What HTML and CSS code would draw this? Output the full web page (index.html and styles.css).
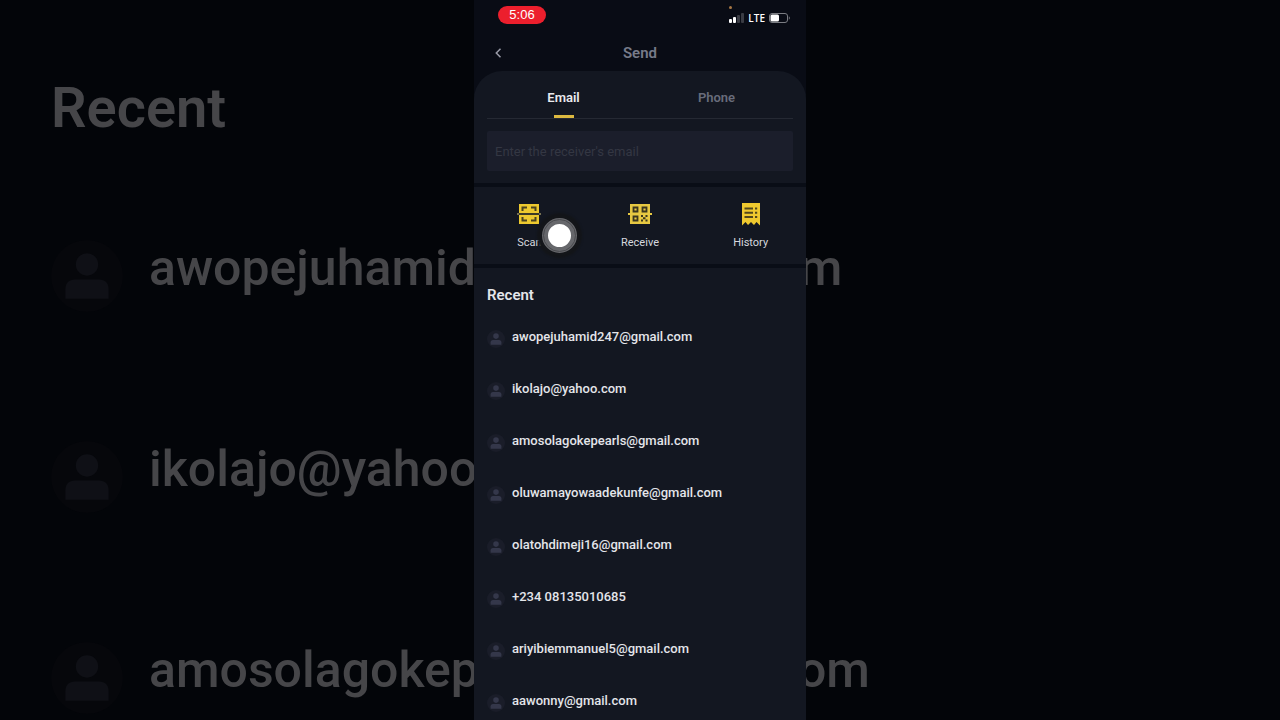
FILE: index.html
```html
<!DOCTYPE html>
<html lang="en">
<head>
<meta charset="utf-8">
<meta name="viewport" content="width=device-width, initial-scale=1">
<title>Send</title>
<link rel="stylesheet" href="styles.css">
</head>

<body>

<!-- person icon, used by every row -->
<svg class="defs" aria-hidden="true">
	<symbol id="person" viewBox="0 0 20 20">
		<circle class="p-bg" cx="10" cy="10" r="10"/>
		<circle class="p-fg" cx="10" cy="6.8" r="3.1"/>
		<path class="p-fg" d="M4 16.3v-2.6c0-1.7 1-2.7 2.6-2.7h6.8c1.6 0 2.6 1 2.6 2.7v2.6z"/>
	</symbol>
</svg>

<!-- enlarged list behind the phone -->
<div class="backdrop" aria-hidden="true">
	<div class="big-title">Recent</div>
	<div class="big-row"><svg><use href="#person"/></svg><span>awopejuhamid247@gmail.com</span></div>
	<div class="big-row"><svg><use href="#person"/></svg><span>ikolajo@yahoo.com</span></div>
	<div class="big-row"><svg><use href="#person"/></svg><span>amosolagokepearls@gmail.com</span></div>
</div>

<main class="phone">
	<div class="status">
		<span class="time">5:06</span>
		<div class="signal">
			<span class="dot"></span>
			<svg width="15" height="10" viewBox="0 0 15 10">
				<g fill="#fff"><rect y="6" width="3" height="4" rx="1"/><rect x="4" y="4" width="3" height="6" rx="1"/></g>
				<g fill="#3a3c44"><rect x="8" y="2" width="3" height="8" rx="1"/><rect x="12" width="3" height="10" rx="1"/></g>
			</svg>
			<span class="lte">LTE</span>
			<svg width="21" height="10" viewBox="0 0 21 10">
				<rect x=".5" y=".5" width="18" height="9" rx="2.5" fill="none" stroke="#7b7d83"/>
				<rect x="1.5" y="1.5" width="8.5" height="7" rx="1.5" fill="#fff"/>
				<path d="M19.8 3.3v3.4q1-.6 1-1.7t-1-1.7z" fill="#7b7d83"/>
			</svg>
		</div>
	</div>

	<header class="head">
		<button class="back" type="button" aria-label="Back">
			<svg width="8" height="10" viewBox="0 0 8 10"><path d="M6.500 .8L2.300 5l4.200 4.200" fill="none" stroke="#9a9ca8" stroke-width="1.500"/></svg>
		</button>
		<h1>Send</h1>
	</header>

	<div class="sheet">
		<section class="form">
			<div class="tabs" role="tablist">
				<button class="tab active" type="button" role="tab" aria-selected="true">Email</button>
				<button class="tab" type="button" role="tab" aria-selected="false">Phone</button>
			</div>
			<input class="receiver" type="email" aria-label="Receiver's email" placeholder="Enter the receiver's email">
		</section>

		<nav class="actions">
			<a href="#scan">
				<svg width="24" height="24" viewBox="0 0 24 24">
					<path d="M2 2h20v20H2z" fill="#edc92f"/>
					<path d="M5.5 9V5.5H10M14 5.5h4.500V9M5.500 15v3.500H10M14 18.500h4.500V15" fill="none" stroke="#4b431f" stroke-width="2"/>
					<path d="M2 11h20v2H2z" fill="#3d3b27"/>
					<path d="M0 11h2v2H0zM22 11h2v2h-2z" fill="#777153"/>
				</svg>
				<span>Scan</span>
				<i class="touch"></i>
			</a>
			<a href="#receive">
				<svg width="24" height="24" viewBox="0 0 24 24">
					<path d="M2 2h20v20H2zM0 11h24v2H0z" fill="#e7c842"/>
					<g fill="none" stroke="#3b361f" stroke-width="1.800">
						<path d="M5.500 5.500h4v4h-4zM14.500 5.500h4v4h-4zM5.500 14.500h4v4h-4z"/>
					</g>
					<path d="M13 13h2v2h-2zM17.500 13h2v2h-2zM15 15.300h2.500v2H15zM13 17.500h2v2h-2zM17.500 17.500h2v2h-2z" fill="#3b361f"/>
				</svg>
				<span>Receive</span>
			</a>
			<a href="#history">
				<svg width="24" height="24" viewBox="0 0 24 24">
					<path d="M3 1h18v22.500l-3.500-3.500-2.500 3-3-3-3 3-2.500-3L3 23.500z" fill="#efc92f"/>
					<path d="M5.500 6.500h8.500M5.500 10.800h8.500M5.500 15h8.500M16 6.500h2.200M16 10.800h2.200M16 15h2.200" stroke="#51471c" stroke-width="2"/>
				</svg>
				<span>History</span>
			</a>
		</nav>

		<section class="recent">
			<h2>Recent</h2>
			<ul>
				<li><svg><use href="#person"/></svg><span>awopejuhamid247@gmail.com</span></li>
				<li><svg><use href="#person"/></svg><span>ikolajo@yahoo.com</span></li>
				<li><svg><use href="#person"/></svg><span>amosolagokepearls@gmail.com</span></li>
				<li><svg><use href="#person"/></svg><span>oluwamayowaadekunfe@gmail.com</span></li>
				<li><svg><use href="#person"/></svg><span>olatohdimeji16@gmail.com</span></li>
				<li><svg><use href="#person"/></svg><span>+234 08135010685</span></li>
				<li><svg><use href="#person"/></svg><span>ariyibiemmanuel5@gmail.com</span></li>
				<li><svg><use href="#person"/></svg><span>aawonny@gmail.com</span></li>
			</ul>
		</section>
	</div>
</main>

</body>
</html>
```
FILE: styles.css
```css
* {
	box-sizing: border-box;
}

body {
	margin: 0;
	height: 100vh;
	display: grid;
	grid-template-columns: 100%;
	grid-template-rows: 100%;
	overflow: hidden;
	background: #030509;
	color: #e4e5ea;
	font-family: Roboto, "Noto Sans", sans-serif;
}

button {
	border: 0;
	padding: 0;
	background: none;
	font-family: inherit;
}

.defs {
	position: absolute;
	width: 0;
	height: 0;
}

/* backdrop and phone share one grid cell */
.backdrop,
.phone {
	grid-area: 1 / 1;
	overflow: hidden;
}

.backdrop {
	--person-bg: #06070b;
	--person-fg: #0f1016;
	padding: 68px 0 0 51px;
	color: #464649;
	white-space: nowrap;
}

.big-title {
	height: 100px;
	font-size: 56px;
	line-height: 80px;
	font-weight: 600;
}

.big-row {
	display: flex;
	align-items: flex-start;
	gap: 26px;
	height: 201px;
	padding-top: 60px;
	font-size: 50px;
	line-height: 80px;
	font-weight: 500;
}

.big-row svg {
	width: 72px;
	height: 72px;
	margin-top: 12px;
}

.p-bg {
	fill: var(--person-bg);
}

.p-fg {
	fill: var(--person-fg);
}

.phone {
	--person-bg: #1a1d29;
	--person-fg: #34374a;
	display: flex;
	flex-direction: column;
	justify-self: center;
	width: 332px;
	max-width: 100%;
	background: #090c15;
}

/******* status bar *******/
.status {
	display: flex;
	flex-shrink: 0;
	justify-content: space-between;
	height: 35px;
	padding: 6px 16px 0 24px;
}

.time {
	width: 48px;
	height: 18px;
	border-radius: 9px;
	background: #ec1f2d;
	color: #fff;
	font: 13px/18px "Liberation Sans", sans-serif;
	text-align: center;
}

.signal {
	position: relative;
	display: flex;
	align-items: center;
	gap: 4px;
	height: 24px;
}

.dot {
	position: absolute;
	top: 0;
	left: 0;
	width: 3px;
	height: 3px;
	border-radius: 50%;
	background: #a87845;
}

.lte {
	color: #fff;
	font: 600 10px/12px "Open Sans", sans-serif;
}

/******* header *******/
.head {
	display: grid;
	flex-shrink: 0;
	grid-template-columns: 48px 1fr 48px;
	align-items: center;
	height: 36px;
}

.back {
	height: 34px;
}

h1 {
	margin: 0;
	color: #777b89;
	font-size: 15px;
	line-height: 20px;
	font-weight: 600;
	text-align: center;
}

.sheet {
	flex: 1 0 auto;
	border-radius: 28px 28px 0 0;
	background: #131721;
}

.form {
	padding: 0 13px 12px;
	border-bottom: 4px solid #090d16;
}

.tabs {
	display: flex;
	height: 48px;
	margin-bottom: 12px;
	border-bottom: 1px solid #252933;
}

.tab {
	position: relative;
	flex: 1;
	padding-top: 6px;
	color: #686c7b;
	font-size: 13px;
	line-height: 20px;
	font-weight: 600;
}

.tab.active {
	color: #e9eaee;
}

.tab.active::after {
	content: "";
	position: absolute;
	bottom: 0;
	left: 50%;
	width: 20px;
	height: 3px;
	margin-left: -10px;
	background: #dcb940;
}

.receiver {
	display: block;
	width: 100%;
	height: 40px;
	padding: 0 8px;
	border: 0;
	border-radius: 2px;
	background: #1b1e2b;
	color: #e4e5ea;
	font-family: inherit;
	font-size: 13px;
}

.receiver::placeholder {
	color: #343743;
	opacity: 1;
}

/******* scan / receive / history *******/
.actions {
	display: grid;
	grid-template-columns: repeat(3, 1fr);
	padding: 15px 0 12px;
	border-bottom: 4px solid #090d16;
}

.actions a {
	position: relative;
	display: flex;
	flex-direction: column;
	align-items: center;
	gap: 8px;
	color: #d5d7df;
	font-size: 11px;
	line-height: 18px;
	text-decoration: none;
}

/* finger mark over the Scan button */
.touch {
	position: absolute;
	top: 16px;
	left: 68px;
	width: 35px;
	height: 35px;
	border: 6px solid #66676b;
	outline: 1px solid #494a4e;
	outline-offset: -2px;
	border-radius: 50%;
	background: #fff;
	box-shadow: 0 0 2px 5px #131519;
}

/******* recent list *******/
.recent {
	padding: 17px 13px 0;
}

h2 {
	margin: 0 0 6px;
	font-size: 15px;
	line-height: 20px;
	font-weight: 600;
}

ul {
	margin: 0;
	padding: 0;
	list-style: none;
}

li {
	display: flex;
	align-items: center;
	gap: 7px;
	height: 52px;
	font-size: 13px;
	line-height: 20px;
	font-weight: 500;
}

li svg {
	width: 18px;
	height: 18px;
	margin-top: 3px;
}
```
